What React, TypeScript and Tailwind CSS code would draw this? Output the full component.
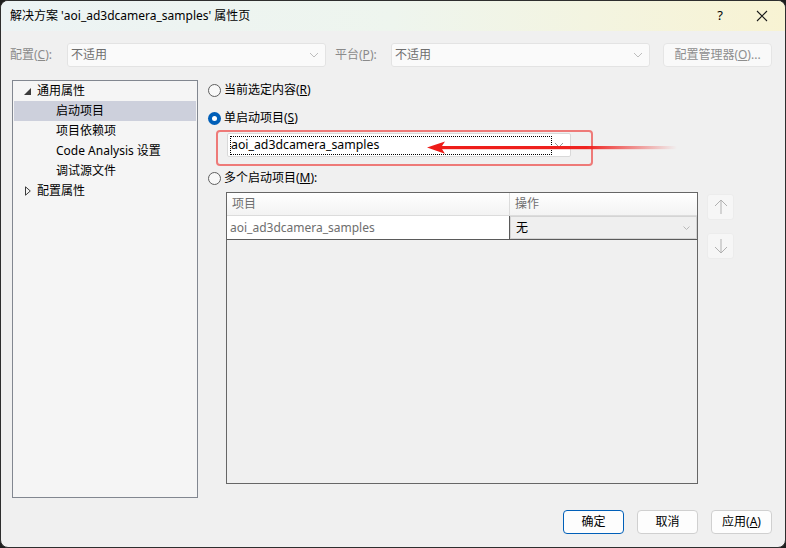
import React from 'react';

const font = { fontFamily: '"Segoe UI", "Noto Sans", "Noto Sans CJK SC", sans-serif' };

const Chevron: React.FC<{ color?: string }> = ({ color = '#a0a0a0' }) => (
  <svg width="10" height="6" viewBox="0 0 10 6" fill="none">
    <path d="M1 1 L5 5 L9 1" stroke={color} strokeWidth="1" />
  </svg>
);

const Radio: React.FC<{ checked?: boolean }> = ({ checked }) =>
  checked ? (
    <span className="w-[13px] h-[13px] rounded-full bg-[#005fb8] flex items-center justify-center shrink-0">
      <span className="w-[5px] h-[5px] rounded-full bg-white" />
    </span>
  ) : (
    <span className="w-[13px] h-[13px] rounded-full border border-[#5f5f5f] bg-[#f8f8f8] shrink-0" />
  );

const ComboBox: React.FC<{ width: string; text: string }> = ({ width, text }) => (
  <div
    className={`${width} h-[24px] bg-[#fafafa] border border-[#e3e3e3] rounded-[3px] flex items-center justify-between pl-[3px] pr-[6px] text-[#6e6e6e]`}
  >
    <span>{text}</span>
    <Chevron color="#bdbdbd" />
  </div>
);

const treeItems = [
  { label: '通用属性', level: 0, icon: 'open' },
  { label: '启动项目', level: 1, selected: true },
  { label: '项目依赖项', level: 1 },
  { label: 'Code Analysis 设置', level: 1 },
  { label: '调试源文件', level: 1 },
  { label: '配置属性', level: 0, icon: 'closed' },
];

const App: React.FC = () => {
  return (
    <div className="w-[786px] h-[548px] bg-[#1e1e1e] text-[12px] text-black" style={font}>
      <div className="w-full h-full flex flex-col bg-[#f0f0f0] border border-[#2e2e2e] rounded-[8px] overflow-hidden">
        {/* title bar */}
        <div className="h-[30px] flex items-center pl-[9px] pr-[17px] bg-gradient-to-r from-[#ecf3f4] via-[#eef5ee] to-[#f8f3d3]">
          <span className="flex-1 text-[12px]">解决方案 'aoi_ad3dcamera_samples' 属性页</span>
          <span className="text-[13px] mr-[33px]">?</span>
          <svg width="12" height="12" viewBox="0 0 12 12">
            <path d="M1 1 L11 11 M11 1 L1 11" stroke="#1a1a1a" strokeWidth="1.1" />
          </svg>
        </div>

        {/* config row */}
        <div className="mt-[12px] h-[24px] flex items-center pl-[9px] text-[#8a8a8a]">
          <span className="w-[57px]">
            配置(<span className="underline">C</span>):
          </span>
          <ComboBox width="w-[259px]" text="不适用" />
          <span className="w-[56px] ml-[9px]">
            平台(<span className="underline">P</span>):
          </span>
          <ComboBox width="w-[259px]" text="不适用" />
          <div className="ml-[13px] w-[109px] h-[24px] rounded-[4px] bg-[#f9f9f9] border border-[#e5e5e5] flex items-center justify-center text-[#8e8e8e]">
            配置管理器(<span className="underline">O</span>)...
          </div>
        </div>

        {/* main */}
        <div className="mt-[13px] h-[418px] flex pl-[11px]">
          {/* tree */}
          <div className="w-[186px] h-full border border-[#828790] bg-[#f5f5f5] px-[1px]">
            {treeItems.map((it) => (
              <div
                key={it.label}
                className={`h-[20px] flex items-center ${it.selected ? 'bg-[#cdd0dc]' : ''}`}
              >
                {it.level === 0 ? (
                  <>
                    <span className="w-[23px] flex justify-end pr-[6px]">
                      {it.icon === 'open' ? (
                        <svg width="7" height="7" viewBox="0 0 7 7">
                          <path d="M7 0 L7 7 L0 7 Z" fill="#3c3c3c" />
                        </svg>
                      ) : (
                        <svg width="6" height="10" viewBox="0 0 6 10">
                          <path d="M0.5 0.8 L5.3 5 L0.5 9.2 Z" fill="none" stroke="#3c3c3c" strokeWidth="1" />
                        </svg>
                      )}
                    </span>
                    <span>{it.label}</span>
                  </>
                ) : (
                  <span className="pl-[42px]">{it.label}</span>
                )}
              </div>
            ))}
          </div>

          {/* right panel */}
          <div className="ml-[10px] flex flex-col relative">
            <div className="mt-[2px] h-[16px] flex items-center gap-[3px]">
              <Radio />
              <span>
                当前选定内容(<span className="underline">R</span>)
              </span>
            </div>
            <div className="mt-[12px] h-[16px] flex items-center gap-[3px]">
              <Radio checked />
              <span>
                单启动项目(<span className="underline">S</span>)
              </span>
            </div>
            <div className="mt-[4px] ml-[8px] w-[377px] h-[36px] border-2 border-[#ee7a78] rounded-[4px] pl-[9px] pt-[1px]">
              <div className="w-[344px] h-[24px] bg-white border border-[#d9d9d9] rounded-[2px] flex items-center pl-[2px] pr-[6px]">
                <div className="w-[322px] h-[19px] border border-dotted border-black flex items-center text-[12.3px]">
                  aoi_ad3dcamera_samples
                </div>
                <span className="ml-auto">
                  <Chevron color="#9a9a9a" />
                </span>
              </div>
            </div>
            <div className="mt-[4px] h-[16px] flex items-center gap-[3px]">
              <Radio />
              <span>
                多个启动项目(<span className="underline">M</span>):
              </span>
            </div>

            <div className="mt-[6px] ml-[18px] flex">
              {/* table */}
              <div className="w-[472px] h-[292px] border border-[#666666] bg-[#f0f0f0] flex flex-col">
                <div className="h-[23px] flex bg-gradient-to-b from-white to-[#f3f3f3] border-b border-[#dcdcdc] text-[#6e6e6e]">
                  <div className="w-[283px] border-r border-[#dcdcdc] flex items-center pl-[5px]">项目</div>
                  <div className="flex-1 flex items-center pl-[5px]">操作</div>
                </div>
                <div className="h-[24px] flex border-b border-[#5a5a5a] bg-white">
                  <div className="w-[283px] flex items-center pl-[3px] text-[#6e6e6e] border-r border-[#5a5a5a]">
                    aoi_ad3dcamera_samples
                  </div>
                  <div className="flex-1 flex items-center justify-between bg-[#efefef] border border-[#d4d4d4] pl-[5px] pr-[6px]">
                    <span>无</span>
                    <svg width="7" height="4" viewBox="0 0 7 4" fill="none">
                      <path d="M0.5 0.5 L3.5 3.5 L6.5 0.5" stroke="#b8b8b8" strokeWidth="1" />
                    </svg>
                  </div>
                </div>
              </div>

              {/* up/down buttons */}
              <div className="ml-[9px] mt-[2px] flex flex-col gap-[13px]">
                <div className="w-[27px] h-[26px] rounded-[3px] bg-[#f6f6f6] border border-[#ececec] flex items-center justify-center">
                  <svg width="14" height="16" viewBox="0 0 14 16" fill="none">
                    <path d="M7 1 L7 15 M1 7 L7 1 L13 7" stroke="#b0b0b0" strokeWidth="1" />
                  </svg>
                </div>
                <div className="w-[27px] h-[26px] rounded-[3px] bg-[#f6f6f6] border border-[#ececec] flex items-center justify-center">
                  <svg width="14" height="16" viewBox="0 0 14 16" fill="none">
                    <path d="M7 1 L7 15 M1 9 L7 15 L13 9" stroke="#b0b0b0" strokeWidth="1" />
                  </svg>
                </div>
              </div>
            </div>

            {/* red annotation arrow */}
            <svg
              className="absolute left-[217px] top-[58px]"
              width="260"
              height="20"
              viewBox="0 0 260 20"
            >
              <defs>
                <linearGradient id="fade" x1="0" y1="0" x2="1" y2="0">
                  <stop offset="0" stopColor="#ee1c18" />
                  <stop offset="0.62" stopColor="#ef2320" />
                  <stop offset="1" stopColor="#ef2320" stopOpacity="0" />
                </linearGradient>
              </defs>
              <rect x="14" y="8" width="238" height="3.2" fill="url(#fade)" />
              <path d="M2 9.6 L20 3.5 L16 9.6 L20 15.7 Z" fill="#ee1c18" />
            </svg>
          </div>
        </div>

        {/* bottom buttons */}
        <div className="mt-[12px] flex justify-end gap-[13px] pr-[13px]">
          <div className="w-[61px] h-[24px] rounded-[4px] bg-[#fdfdfd] border border-[#005fb8] flex items-center justify-center">
            确定
          </div>
          <div className="w-[61px] h-[24px] rounded-[4px] bg-[#fdfdfd] border border-[#d0d0d0] flex items-center justify-center">
            取消
          </div>
          <div className="w-[61px] h-[24px] rounded-[4px] bg-[#fdfdfd] border border-[#d0d0d0] flex items-center justify-center">
            应用(<span className="underline">A</span>)
          </div>
        </div>
      </div>
    </div>
  );
};

export default App;
